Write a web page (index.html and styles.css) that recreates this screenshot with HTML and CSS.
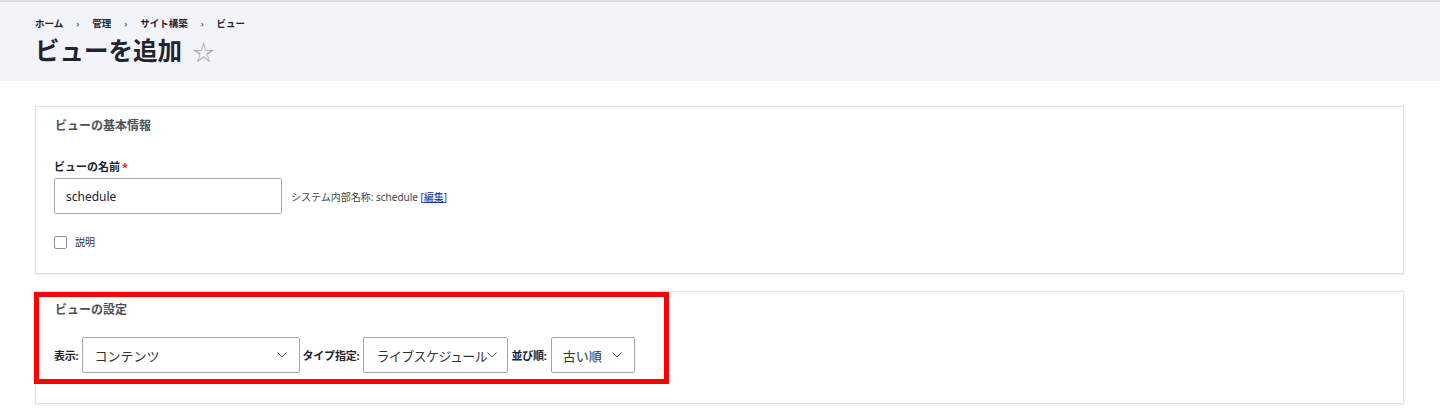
FILE: index.html
```html
<!DOCTYPE html>
<html lang="ja">
<head>
  <meta charset="UTF-8" />
  <meta name="viewport" content="width=device-width, initial-scale=1.0"/>
  <title>ビューを追加</title>
  <link rel="stylesheet" href="styles.css">
</head>
<body>
  <header class="pageHeader">
    <nav class="breadcrumb">
      <a href="#">ホーム</a><span class="sep">›</span>
      <a href="#">管理</a><span class="sep">›</span>
      <a href="#">サイト構築</a><span class="sep">›</span>
      <a href="#">ビュー</a>
    </nav>
    <h1 class="pageTitle">ビューを追加 <span class="star">☆</span></h1>
  </header>

  <main class="content">
    <section class="card">
      <div class="legend">ビューの基本情報</div>
      <label class="fieldLabel">ビューの名前<span class="req">*</span></label>
      <div class="nameRow">
        <input class="textInput" type="text" value="schedule">
        <span class="machineName">システム内部名称: schedule [<a href="#">編集</a>]</span>
      </div>
      <label class="checkRow"><span class="checkbox"></span>説明</label>
    </section>

    <section class="card settings">
      <div class="highlight"></div>
      <div class="legend">ビューの設定</div>
      <div class="selectRow">
        <span class="inlineLabel first">表示:</span>
        <div class="select wide"><span>コンテンツ</span>
          <svg width="10" height="6" viewBox="0 0 10 6"><path d="M0.5 0.5 L5 5 L9.5 0.5" fill="none" stroke="#555" stroke-width="1"/></svg>
        </div>
        <span class="inlineLabel">タイプ指定:</span>
        <div class="select mid"><span>ライブスケジュール</span>
          <svg width="10" height="6" viewBox="0 0 10 6"><path d="M0.5 0.5 L5 5 L9.5 0.5" fill="none" stroke="#555" stroke-width="1"/></svg>
        </div>
        <span class="inlineLabel">並び順:</span>
        <div class="select narrow"><span>古い順</span>
          <svg width="10" height="6" viewBox="0 0 10 6"><path d="M0.5 0.5 L5 5 L9.5 0.5" fill="none" stroke="#555" stroke-width="1"/></svg>
        </div>
      </div>
    </section>
  </main>
</body>
</html>
```

FILE: styles.css
```css
* {
  box-sizing: border-box;
}

body {
  margin: 0;
  font-family: "Noto Sans", "Noto Sans CJK JP", sans-serif;
  color: #222330;
  background: #fff;
}

.pageHeader {
  background: #f3f4f9;
  border-top: 2px solid #dcdde3;
  height: 81px;
  padding: 14px 35px 0;
}

.breadcrumb {
  font-size: 9.5px;
  font-weight: 700;
  line-height: 16px;
  display: flex;
  align-items: center;
}

.breadcrumb a {
  color: #222330;
  text-decoration: none;
}

.breadcrumb .sep {
  margin: 0 13px;
  font-weight: 400;
}

.pageTitle {
  margin: 2px 0 0;
  font-size: 24.5px;
  line-height: 32px;
  font-weight: 700;
  font-family: "Noto Sans CJK JP", sans-serif;
}

.pageTitle .star {
  color: #a8a8b0;
  font-weight: 400;
  font-size: 22px;
  margin-left: 5px;
}

.content {
  padding: 25px 36px 0 35px;
}

.card {
  border: 1px solid #e2e2e6;
  box-shadow: 0 1px 2px rgba(0, 0, 0, 0.08);
  padding: 9px 18px 24px;
  margin-bottom: 17px;
  position: relative;
}

.legend {
  font-size: 12px;
  font-weight: 700;
  color: #505058;
  line-height: 20px;
  padding-left: 1px;
}

.fieldLabel {
  display: block;
  margin-top: 22px;
  font-size: 11px;
  font-weight: 700;
  line-height: 18px;
  margin-bottom: 2px;
}

.req {
  color: #dc2323;
  margin-left: 2px;
}

.nameRow {
  display: flex;
  align-items: center;
  gap: 9px;
}

.textInput {
  width: 228px;
  height: 36px;
  border: 1px solid #a5a5ad;
  border-radius: 2px;
  padding: 0 11px;
  font-family: "Noto Sans", sans-serif;
  font-size: 12px;
  color: #222330;
}

.machineName {
  font-size: 10px;
  color: #444;
}

.machineName a {
  color: #0036b1;
}

.checkRow {
  display: flex;
  align-items: center;
  gap: 8px;
  margin-top: 21px;
  font-size: 10px;
  color: #333;
  line-height: 14px;
}

.checkbox {
  width: 13px;
  height: 13px;
  border: 1px solid #909098;
  border-radius: 2px;
}

.settings {
  padding: 8px 18px 30px;
}

.selectRow {
  display: flex;
  align-items: center;
  margin-top: 17px;
}

.inlineLabel {
  font-size: 11px;
  font-weight: 700;
  margin: 0 4px 0 3px;
  letter-spacing: -0.2px;
}

.inlineLabel.first {
  margin-left: 0;
  margin-right: 3px;
}

.select {
  height: 36px;
  border: 1px solid #a5a5ad;
  border-radius: 2px;
  display: flex;
  align-items: center;
  justify-content: space-between;
  padding: 0 12px;
  font-size: 13px;
  color: #333;
  overflow: hidden;
  white-space: nowrap;
}

.select svg {
  flex-shrink: 0;
}

.select.wide {
  width: 218px;
}

.select.mid {
  width: 145px;
  padding-right: 12px;
}

.select.mid span {
  letter-spacing: -0.6px;
}

.select.narrow {
  width: 84px;
  padding: 0 12px 0 11px;
}

.highlight {
  position: absolute;
  top: 0;
  left: -2px;
  width: 635px;
  height: 92px;
  border: 5px solid #ff0000;
  pointer-events: none;
}
```
